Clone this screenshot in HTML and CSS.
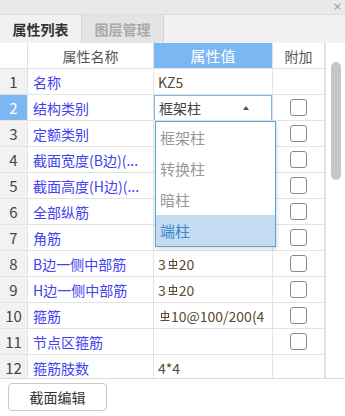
FILE: index.html
```html
<!DOCTYPE html>
<html>
<head>
	<title>属性</title>
	<link rel="stylesheet" href="styles.css">
</head>
<body>
	<div class="titlebar"><span class="close">&times;</span></div>

	<div class="tabs">
		<div class="tab active">属性列表</div>
		<div class="tab">图层管理</div>
	</div>

	<div class="main">
		<div class="grid">
			<div class="row head">
				<div class="num"></div>
				<div class="name">属性名称</div>
				<div class="val">属性值</div>
				<div class="add">附加</div>
			</div>

			<div class="row">
				<div class="num">1</div>
				<div class="name">名称</div>
				<div class="val">KZ5</div>
				<div class="add"></div>
			</div>
			<div class="row current">
				<div class="num">2</div>
				<div class="name">结构类别</div>
				<div class="val"><div class="select">框架柱<span class="caret"></span></div></div>
				<div class="add"><span class="check"></span></div>
			</div>
			<div class="row">
				<div class="num">3</div>
				<div class="name">定额类别</div>
				<div class="val"></div>
				<div class="add"><span class="check"></span></div>
			</div>
			<div class="row">
				<div class="num">4</div>
				<div class="name">截面宽度(B边)(...</div>
				<div class="val"></div>
				<div class="add"><span class="check"></span></div>
			</div>
			<div class="row">
				<div class="num">5</div>
				<div class="name">截面高度(H边)(...</div>
				<div class="val"></div>
				<div class="add"><span class="check"></span></div>
			</div>
			<div class="row">
				<div class="num">6</div>
				<div class="name">全部纵筋</div>
				<div class="val"></div>
				<div class="add"><span class="check"></span></div>
			</div>
			<div class="row">
				<div class="num">7</div>
				<div class="name">角筋</div>
				<div class="val"></div>
				<div class="add"><span class="check"></span></div>
			</div>
			<div class="row">
				<div class="num">8</div>
				<div class="name">B边一侧中部筋</div>
				<div class="val">3<svg class="bar" viewBox="0 0 10 12"><path d="M5 0.5v10M1.5 3.5h7v4h-7zM0.5 10.5h9"/></svg>20</div>
				<div class="add"><span class="check"></span></div>
			</div>
			<div class="row">
				<div class="num">9</div>
				<div class="name">H边一侧中部筋</div>
				<div class="val">3<svg class="bar" viewBox="0 0 10 12"><path d="M5 0.5v10M1.5 3.5h7v4h-7zM0.5 10.5h9"/></svg>20</div>
				<div class="add"><span class="check"></span></div>
			</div>
			<div class="row">
				<div class="num">10</div>
				<div class="name">箍筋</div>
				<div class="val"><svg class="bar" viewBox="0 0 10 12"><path d="M5 0.5v10M1.5 3.5h7v4h-7zM0.5 10.5h9"/></svg>10@100/200(4</div>
				<div class="add"><span class="check"></span></div>
			</div>
			<div class="row">
				<div class="num">11</div>
				<div class="name">节点区箍筋</div>
				<div class="val"></div>
				<div class="add"><span class="check"></span></div>
			</div>
			<div class="row">
				<div class="num">12</div>
				<div class="name">箍筋肢数</div>
				<div class="val">4*4</div>
				<div class="add"></div>
			</div>

			<ul class="dropdown">
				<li>框架柱</li>
				<li>转换柱</li>
				<li>暗柱</li>
				<li class="picked">端柱</li>
			</ul>
		</div>
		<div class="scrollbar"><div class="thumb"></div></div>
	</div>

	<div class="footer">
		<button class="btn">截面编辑</button>
	</div>
</body>
</html>
```

FILE: styles.css
```css
	html, body{
		margin: 0;
		padding: 0;
	}
	body{
		width: 345px;
		height: 416px;
		overflow: hidden;
		background: #fff;
		font-family: "Noto Sans CJK SC", "Noto Sans", sans-serif;
		font-size: 14px;
		color: #333;
	}

	.titlebar{
		height: 14px;
		background: #e9e9e9;
		border-bottom: 1px solid #dcdcdc;
		display: flex;
		justify-content: flex-end;
		align-items: center;
	}
	.close{
		color: #999;
		font-family: "DejaVu Sans", sans-serif;
		font-size: 11px;
		line-height: 12px;
		margin-right: 3px;
	}

	.tabs{
		height: 28px;
		display: flex;
		background: #f1f1f1;
	}
	.tab{
		width: 81px;
		display: flex;
		justify-content: center;
		align-items: center;
		font-size: 14px;
		font-weight: bold;
		color: #aaa;
		background: #e4e4e4;
		border-right: 1px solid #d4d4d4;
	}
	.tab.active{
		color: #333;
		background: #f1f1f1;
	}

	.main{
		display: flex;
		height: 335px;
		border-bottom: 1px solid #dcdcdc;
	}
	.grid{
		position: relative;
		width: 325px;
		overflow: hidden;
		border-right: 1px solid #e0e0e0;
	}
	.row{
		display: grid;
		grid-template-columns: 28px 126px 119px 52px;
		height: 26px;
	}
	.row > div{
		display: flex;
		align-items: center;
		border-right: 1px solid #e3e3e3;
		border-bottom: 1px solid #e3e3e3;
		white-space: nowrap;
		overflow: hidden;
	}
	.num{
		justify-content: center;
		background: #f2f2f2;
		color: #444;
		font-size: 15px;
	}
	.name{
		padding-left: 5px;
		color: #4242ee;
	}
	.val{
		padding-left: 4px;
		color: #5b4a33;
	}
	.add{
		justify-content: center;
	}

	.head > div{
		justify-content: center;
		background: #fff;
		color: #555;
		padding: 0;
	}
	.head .val{
		background: #7ab7f3;
		color: #fff;
		font-size: 15px;
	}

	.current .num{
		background: #7ab7f3;
		color: #fff;
	}
	.current .val{
		padding: 0;
	}

	.select{
		box-sizing: border-box;
		width: 100%;
		height: 26px;
		margin-top: 1px;
		padding-left: 4px;
		border: 1px solid #7eb4ea;
		display: flex;
		align-items: center;
		color: #444;
	}
	.caret{
		margin-left: auto;
		margin-right: 22px;
		width: 0;
		height: 0;
		border-left: 3px solid transparent;
		border-right: 3px solid transparent;
		border-bottom: 4px solid #555;
	}

	.check{
		box-sizing: border-box;
		width: 17px;
		height: 17px;
		border: 1px solid #8a8a8a;
		border-radius: 3px;
		background: #fff;
	}

	.bar{
		width: 10px;
		height: 12px;
		margin: 0 1px 0 2px;
		fill: none;
		stroke: #5b4a33;
		stroke-width: 1.1;
	}

	.dropdown{
		position: absolute;
		top: 78px;
		left: 155px;
		width: 119px;
		margin: 0;
		padding: 0;
		list-style: none;
		background: #fff;
		border: 1px solid #52a7d9;
		box-shadow: 1px 2px 4px rgba(0, 0, 0, .15);
	}
	.dropdown li{
		height: 31px;
		display: flex;
		align-items: center;
		padding-left: 4px;
		color: #999;
		font-size: 15px;
	}
	.dropdown li.picked{
		background: #c4dbf1;
		color: #3d86c8;
	}

	.scrollbar{
		flex: 1;
		background: #fff;
	}
	.thumb{
		width: 10px;
		height: 118px;
		margin: 19px 0 0 5px;
		border-radius: 5px;
		background: #c6c6c6;
	}

	.footer{
		padding: 4px 8px;
	}
	.btn{
		width: 99px;
		height: 28px;
		background: #fff;
		border: 1px solid #c8c8c8;
		border-radius: 4px;
		font-family: "Noto Sans CJK SC", sans-serif;
		font-size: 14px;
		color: #333;
	}
```
